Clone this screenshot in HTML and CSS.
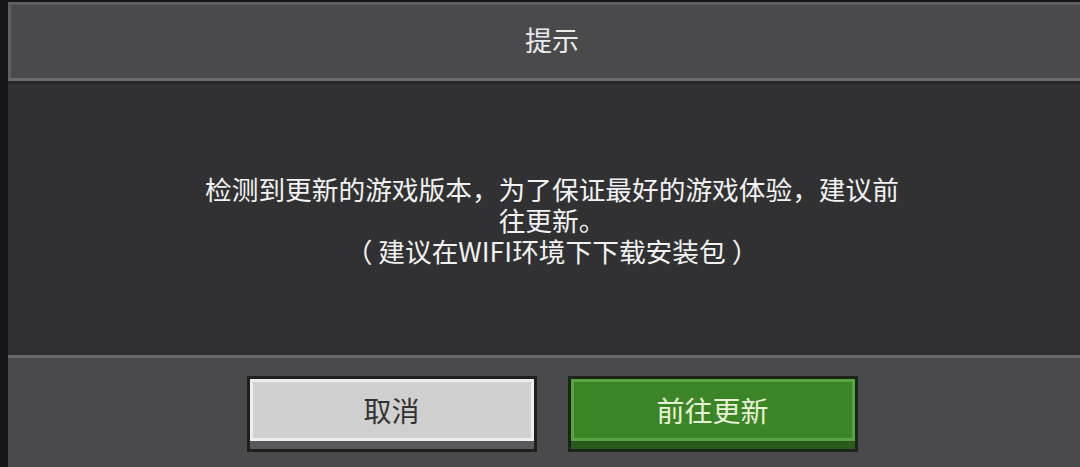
FILE: index.html
```html
<!DOCTYPE html>
<html>
<head>
<meta charset="utf-8">
<link rel="stylesheet" href="styles.css">
</head>
<body>
<div class="frame">
  <div class="header"><span class="title">提示</span></div>
  <div class="sep"></div>
  <div class="content">
    <p class="msg">检测到更新的游戏版本，为了保证最好的游戏体验，建议前<br>往更新。<br>（ 建议在WIFI环境下下载安装包 ）</p>
  </div>
  <div class="footer">
    <div class="btn btn-cancel"><span class="face">取消</span></div>
    <div class="btn btn-ok"><span class="face">前往更新</span></div>
  </div>
</div>
</body>
</html>
```

FILE: styles.css
```css
html, body {
  margin: 0;
  padding: 0;
  background: #161618;
  overflow: hidden;
  width: 1080px;
  height: 467px;
}
.frame {
  margin-left: 8px;
  width: 1088px;
  height: 467px;
  display: flex;
  flex-direction: column;
  font-family: "Noto Sans CJK SC", "Noto Sans", sans-serif;
}
.header {
  margin-top: 2px;
  height: 73px;
  border: 3px solid #5f5f61;
  border-bottom-color: #6b6b6d;
  background: #4a4a4c;
  display: flex;
  align-items: center;
  justify-content: center;
  box-sizing: content-box;
}
.title {
  color: #ececec;
  font-size: 27px;
  line-height: 1;
  margin-bottom: 4px;
}
.sep {
  height: 3px;
  background: #28282a;
}
.content {
  flex: 1;
  background: #313133;
  display: flex;
  align-items: center;
  justify-content: center;
}
.msg {
  margin: 0;
  color: #f2f2f2;
  font-size: 26.7px;
  line-height: 31px;
  text-align: center;
}
.footer {
  height: 91px;
  border-top: 3px solid #6a6a6c;
  background: #4a4a4c;
  display: flex;
  justify-content: center;
  align-items: flex-start;
  gap: 31px;
  padding-top: 18px;
  box-sizing: content-box;
  flex: none;
}
.btn {
  width: 284px;
  height: 70px;
  border: 3px solid #1e1e1e;
  display: flex;
  flex-direction: column;
}
.face {
  height: 56px;
  display: flex;
  align-items: center;
  justify-content: center;
  font-size: 28px;
  line-height: 1;
  border: 3px solid;
}
.btn-cancel {
  background: #5a5a5c;
}
.btn-cancel .face {
  background: #d0d0d0;
  border-color: #ededed;
  color: #333333;
}
.btn-ok {
  background: #2a5a1d;
  border-color: #1a2618;
}
.btn-ok .face {
  background: #3c8527;
  border-color: #5aa345;
  color: #e8f2d6;
}
```
